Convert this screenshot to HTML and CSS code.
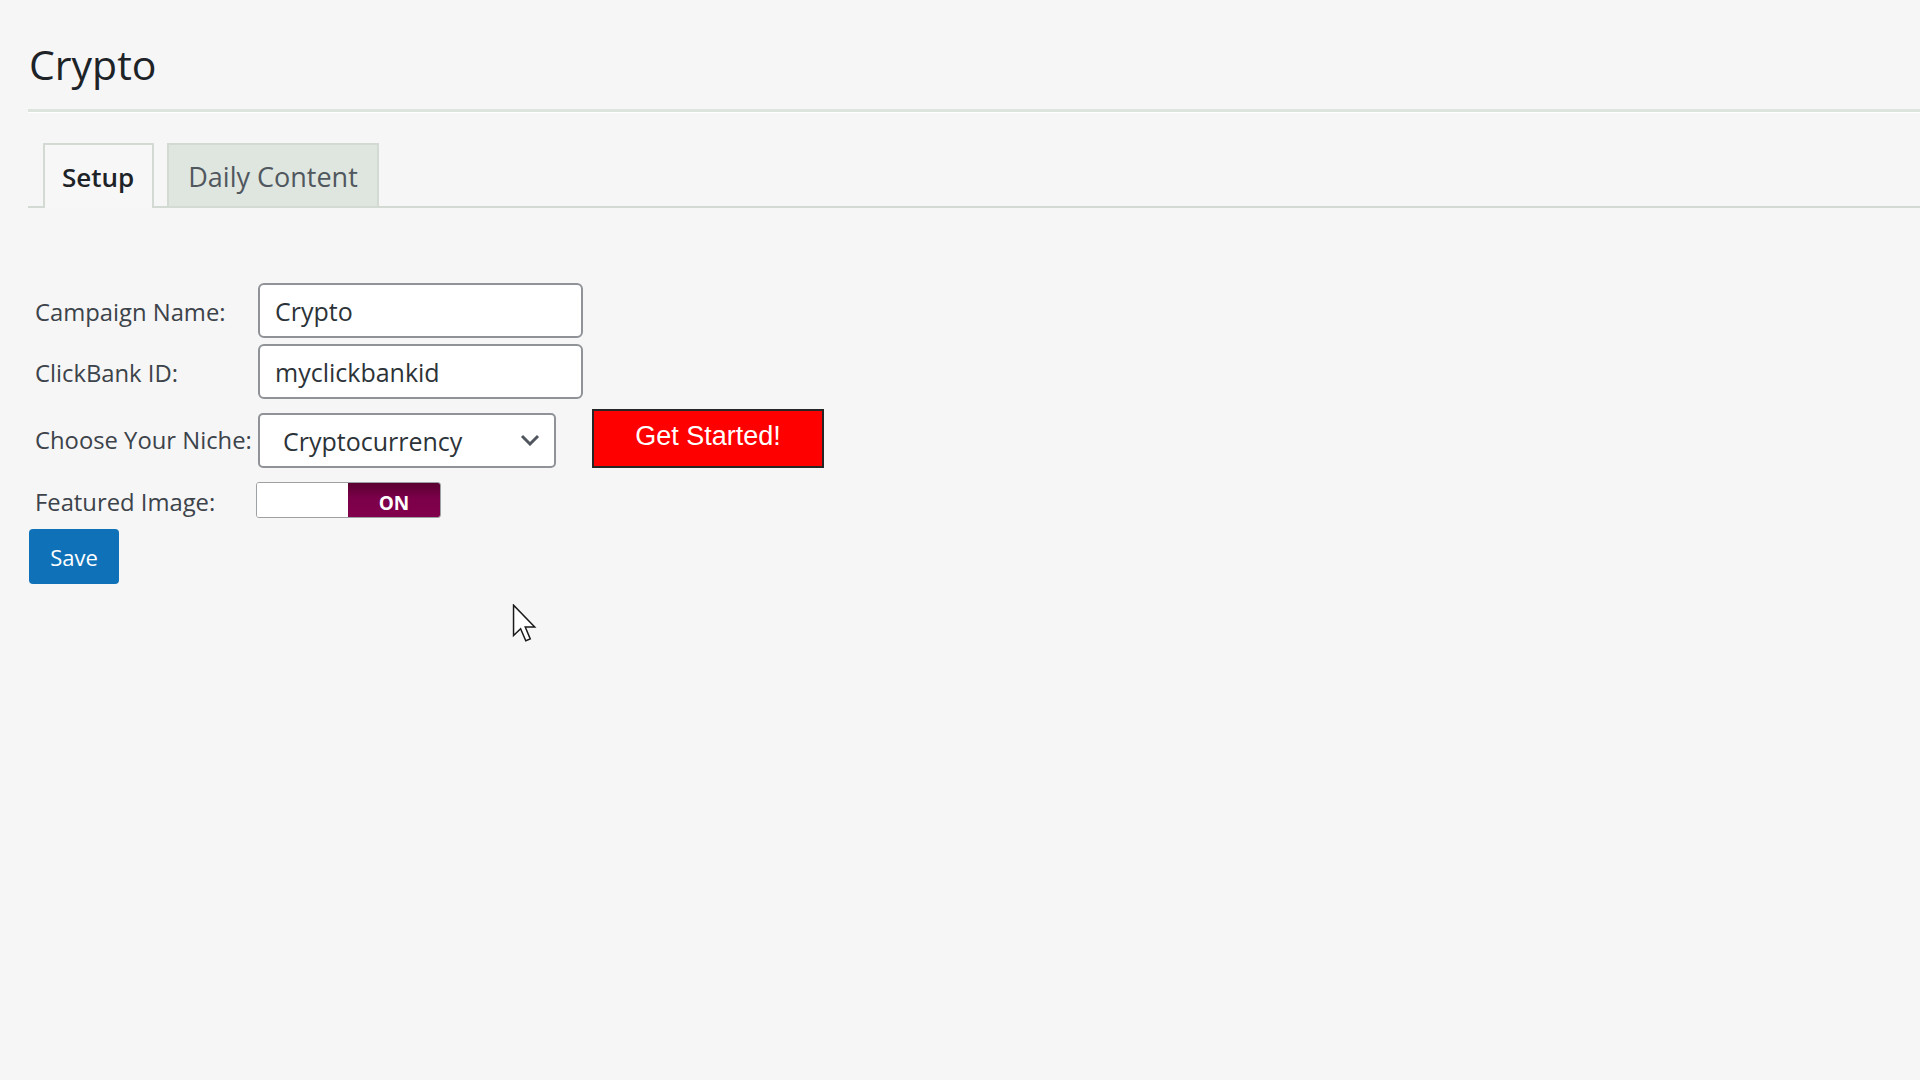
FILE: index.html
```html
<!DOCTYPE html>
<html>
<head>
  <meta name="viewport" content="width=device-width, initial-scale=1">
  <title>Crypto</title>
  <link rel="stylesheet" href="styles.css">
</head>
<body>

  <div class="wrap">
    <h1 class="page-title">Crypto</h1>
    <div class="sep"></div>

    <div class="tabs">
      <a class="tab active" href="#">Setup</a>
      <a class="tab" href="#">Daily Content</a>
    </div>

    <form class="setup">
      <div class="row">
        <label for="cname">Campaign Name:</label>
        <input type="text" id="cname" class="field" value="Crypto">
      </div>
      <div class="row row2">
        <label for="cbid">ClickBank ID:</label>
        <input type="text" id="cbid" class="field" value="myclickbankid">
      </div>
      <div class="row row3">
        <label for="niche">Choose Your Niche:</label>
        <div class="select-wrap">
          <select id="niche" class="niche">
            <option>Cryptocurrency</option>
          </select>
          <svg class="chev" width="20" height="12" viewBox="0 0 20 12">
            <path d="M2 2 L10 10 L18 2" fill="none" stroke="#50575e" stroke-width="3" />
          </svg>
        </div>
        <button type="button" class="start">Get Started!</button>
      </div>
      <div class="row row4">
        <label>Featured Image:</label>
        <div class="toggle">
          <span class="off"></span>
          <span class="on">ON</span>
        </div>
      </div>
    </form>

    <button type="button" class="save">Save</button>
  </div>

  <svg class="cursor" width="25" height="39" viewBox="0 0 13 21">
    <path d="M0.6 0.6 L0.6 17 L4.4 13.3 L7.2 19.8 L9.6 18.8 L6.9 12.4 L12 12.4 Z" fill="#fff" stroke="#1a1a1a" stroke-width="0.8" stroke-linejoin="miter" />
  </svg>

</body>
</html>
```

FILE: styles.css
```css
* {
  box-sizing: border-box;
}

body {
  margin: 0;
  background-color: #f6f6f6;
  font-family: "Open Sans", "Noto Sans", sans-serif;
  color: #3c434a;
}

.wrap {
  padding: 37px 0 0 28px;
}

.page-title {
  margin: 0 0 0 1px;
  font-size: 41px;
  font-weight: 400;
  line-height: 54px;
  color: #1d2327;
}

.sep {
  margin-top: 18px;
  height: 4px;
  border-top: 3px solid #dde4dd;
  border-bottom: 1px solid #ffffff;
}

.tabs {
  display: flex;
  align-items: flex-end;
  margin-top: 30px;
  border-bottom: 2px solid #d3dad3;
}

.tab {
  display: block;
  padding: 14px 19px 11px;
  border: 2px solid #d3dad3;
  border-bottom: 0;
  font-size: 27px;
  line-height: 36px;
  color: #50575e;
  text-decoration: none;
  background-color: #dfe6df;
}

.tab + .tab {
  margin-left: 13px;
}

.tab.active {
  margin-left: 15px;
  margin-bottom: -2px;
  padding: 14px 18px 13px 17px;
  font-size: 26px;
  font-weight: 600;
  color: #1d2327;
  background-color: #f7f7f7;
}

.setup {
  margin-top: 75px;
  padding-left: 7px;
}

.row {
  display: flex;
  align-items: center;
}

.row label {
  width: 223px;
  padding-top: 3px;
  font-size: 23.8px;
  color: #3c434a;
}

.row2 {
  margin-top: 6px;
}

.row3 {
  margin-top: 10px;
}

.row4 {
  margin-top: 14px;
}

.field {
  width: 325px;
  height: 55px;
  padding: 0 15px;
  border: 2px solid #8f9296;
  border-radius: 6px;
  background-color: #ffffff;
  font-family: "Open Sans", "Noto Sans", sans-serif;
  font-size: 25px;
  color: #2c3338;
}

.select-wrap {
  position: relative;
  margin-top: 4px;
}

.niche {
  display: block;
  width: 298px;
  height: 55px;
  padding: 0 0 0 23px;
  border: 2px solid #8f9296;
  border-radius: 5px;
  background-color: #ffffff;
  font-family: "Open Sans", "Noto Sans", sans-serif;
  font-size: 25px;
  color: #2c3338;
  appearance: none;
  -webkit-appearance: none;
}

.chev {
  position: absolute;
  left: 262px;
  top: 21px;
}

.start {
  width: 232px;
  height: 59px;
  margin-left: 36px;
  border: 2px solid #262626;
  background-color: #ff0000;
  color: #ffffff;
  font-family: "Liberation Sans", Arial, sans-serif;
  font-size: 27px;
  padding: 0 0 4px;
}

.toggle {
  display: flex;
  width: 185px;
  height: 36px;
  margin-left: -2px;
  border: 1px solid #9ea1a4;
  border-radius: 3px;
  overflow: hidden;
}

.toggle .off {
  width: 91px;
  background-color: #ffffff;
}

.toggle .on {
  flex: 1;
  padding-top: 5px;
  text-align: center;
  font-size: 19px;
  font-weight: 700;
  line-height: 30px;
  color: #ffffff;
  background: linear-gradient(#5a0031, #7b0049 45%, #82004d);
}

.save {
  display: block;
  width: 90px;
  height: 55px;
  margin: 11px 0 0 1px;
  padding: 0 0 0;
  border: 0;
  border-radius: 4px;
  background-color: #0f72b9;
  color: #ffffff;
  font-family: "Open Sans", "Noto Sans", sans-serif;
  font-size: 22px;
}

.cursor {
  position: absolute;
  left: 512px;
  top: 604px;
}
```
